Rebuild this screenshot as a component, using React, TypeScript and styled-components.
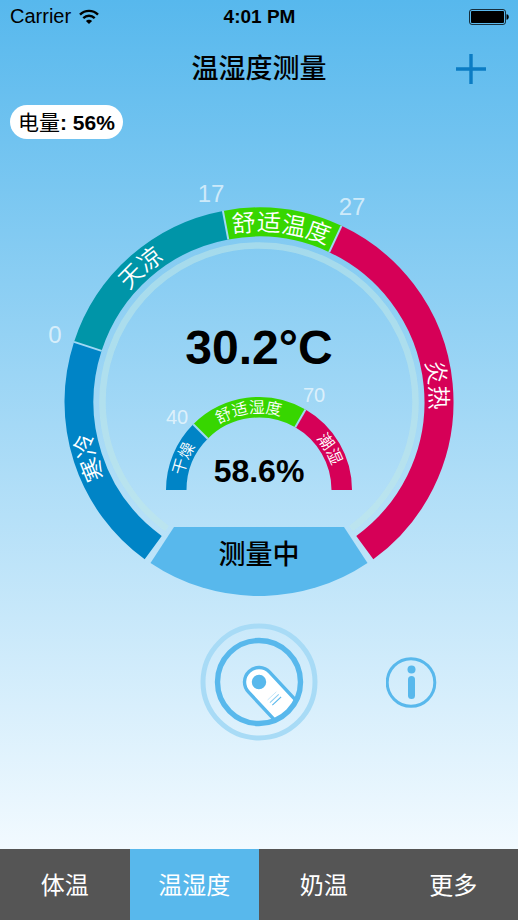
import React from "react";
import styled, { createGlobalStyle } from "styled-components";

const SKY = "#58b8ec";
const BLUE = "#0084c6";
const TEAL = "#0095a8";
const GREEN = "#37d600";
const CRIMSON = "#d60057";

const GlobalStyle = createGlobalStyle`
  *, *::before, *::after { box-sizing: border-box; }
  body {
    margin: 0;
    color: #000;
    font-family: "Liberation Sans", "Noto Sans CJK SC", sans-serif;
  }
  button {
    margin: 0;
    padding: 0;
    border: 0;
    background: none;
    color: inherit;
    font: inherit;
    cursor: pointer;
  }
  svg { display: block; }
`;

const Screen = styled.div`
  display: flex;
  flex-direction: column;
  min-height: 100vh;
`;

const Content = styled.main`
  flex: 1;
  display: flex;
  flex-direction: column;
  background: linear-gradient(#57b8ed, #f2faff);
`;

const StatusBar = styled.div`
  display: grid;
  grid-template-columns: 1fr auto 1fr;
  align-items: center;
  height: 33px;
  padding: 0 9px 0 10px;
  font-size: 20px;
`;

const Carrier = styled.div`
  display: flex;
  align-items: center;
  gap: 8px;
`;

const Clock = styled.time`
  font-size: 19px;
  font-weight: 700;
`;

const BatterySlot = styled.div`
  justify-self: end;
`;

const Header = styled.header`
  display: grid;
  grid-template-columns: 1fr auto 1fr;
  align-items: center;
  height: 72px;
  padding: 0 32px;
`;

const Title = styled.h1`
  grid-column: 2;
  margin: 0;
  font-size: 27px;
  line-height: 40px;
  font-weight: 500;
`;

const AddButton = styled.button`
  justify-self: end;
`;

const PowerBadge = styled.div`
  align-self: flex-start;
  height: 34px;
  margin-left: 10px;
  padding: 0 8px;
  border-radius: 17px;
  background: #fff;
  font-size: 21px;
  line-height: 36px;
  white-space: nowrap;

  strong { font-weight: 700; }
`;

const Dial = styled.section`
  align-self: center;
  display: grid;
  grid-template-rows: 206px 120px 94px;
  justify-items: center;
  width: 440px;
  height: 420px;
  margin-top: 41px;
`;

const DialDrawing = styled.svg`
  grid-area: 1 / 1 / 4 / 2;
`;

const Reading = styled.output<{ $size: number }>`
  grid-column: 1;
  align-self: end;
  font-size: ${(p) => p.$size}px;
  line-height: ${(p) => p.$size}px;
  font-weight: 700;
`;

const Temperature = styled(Reading)`
  grid-row: 1;
  padding-bottom: 14px;
`;

const Humidity = styled(Reading)`
  grid-row: 2;
  padding-bottom: 19px;
`;

const MeasureButton = styled.button`
  grid-area: 3 / 1;
  align-self: end;
  display: grid;
  width: 218px;
  height: 69px;
  margin-bottom: 4px;

  > * { grid-area: 1 / 1; }
`;

const MeasureLabel = styled.span`
  font-size: 27px;
  line-height: 56px;
  font-weight: 500;
`;

const ScaleText = styled.text<{ $size: number }>`
  fill: rgba(255, 255, 255, 0.65);
  font-size: ${(p) => p.$size}px;
  text-anchor: middle;
`;

const ZoneText = styled.text<{ $size: number }>`
  fill: #fff;
  font-family: "Noto Sans CJK SC", sans-serif;
  font-size: ${(p) => p.$size}px;
  font-weight: 350;
  text-anchor: middle;
`;

const Controls = styled.div`
  display: grid;
  grid-template-columns: 1fr auto 1fr;
  align-items: center;
  column-gap: 68px;
  margin: 23px 0 40px;
`;

const ProbeButton = styled.button`
  grid-column: 2;
  border-radius: 50%;
`;

const InfoButton = styled.button`
  justify-self: start;
  border-radius: 50%;
`;

const TabBar = styled.nav`
  display: grid;
  grid-template-columns: repeat(4, 1fr);
  height: 71px;
  background: #555;
`;

const Tab = styled.button<{ $active: boolean }>`
  padding-bottom: 3px;
  background: ${(p) => (p.$active ? SKY : "transparent")};
  color: #fff;
  font-family: "Noto Sans CJK SC", sans-serif;
  font-size: 24px;
  font-weight: 400;
`;

interface Zone {
  id: string;
  label: string;
  from: number;
  to: number;
  color: string;
}

const temperatureZones: Zone[] = [
  { id: "cold", label: "寒冷", from: 126, to: 198, color: BLUE },
  { id: "cool", label: "天凉", from: 198, to: 259.3, color: TEAL },
  { id: "mild", label: "舒适温度", from: 259.3, to: 295.1, color: GREEN },
  { id: "hot", label: "炎热", from: 295.1, to: 414, color: CRIMSON },
];

const humidityZones: Zone[] = [
  { id: "dry", label: "干燥", from: 180, to: 225, color: BLUE },
  { id: "comfy", label: "舒适湿度", from: 225, to: 300, color: GREEN },
  { id: "damp", label: "潮湿", from: 300, to: 360, color: CRIMSON },
];

const point = (cx: number, cy: number, r: number, deg: number) => {
  const a = (deg * Math.PI) / 180;
  return `${(cx + r * Math.cos(a)).toFixed(2)} ${(cy + r * Math.sin(a)).toFixed(2)}`;
};

const arc = (cx: number, cy: number, r: number, from: number, to: number) =>
  `M${point(cx, cy, r, from)}A${r} ${r} 0 ${to - from > 180 ? 1 : 0} 1 ${point(cx, cy, r, to)}`;

interface BandProps {
  zones: Zone[];
  cx: number;
  cy: number;
  inner: number;
  outer: number;
  textRadius: number;
  textSize: number;
}

function Band({ zones, cx, cy, inner, outer, textRadius, textSize }: BandProps) {
  const mid = (inner + outer) / 2;
  return (
    <g>
      {zones.map((z) => (
        <path
          key={z.id}
          d={arc(cx, cy, mid, z.from, z.to)}
          fill="none"
          stroke={z.color}
          strokeWidth={outer - inner}
        />
      ))}
      {zones.slice(1).map((z) => (
        <path
          key={z.id}
          d={`M${point(cx, cy, inner, z.from)}L${point(cx, cy, outer, z.from)}`}
          stroke="#9fd8f4"
          strokeWidth="2"
        />
      ))}
      {zones.map((z) => (
        <g key={z.id}>
          <path id={`zone-${z.id}`} d={arc(cx, cy, textRadius, z.from, z.to)} fill="none" />
          <ZoneText $size={textSize}>
            <textPath href={`#zone-${z.id}`} startOffset="50%">
              {z.label}
            </textPath>
          </ZoneText>
        </g>
      ))}
    </g>
  );
}

function WifiIcon() {
  return (
    <svg width="20" height="16" viewBox="0 0 20 16" fill="none" stroke="#000" strokeWidth="2.4" aria-hidden="true">
      <path d="M1 5.6C6 .6 14 .6 19 5.6" />
      <path d="M4.3 9.2C7.6 6 12.4 6 15.7 9.2" />
      <path d="M10 15L6.9 12C8.6 10.2 11.4 10.2 13.1 12Z" fill="#000" stroke="none" />
    </svg>
  );
}

function BatteryIcon() {
  return (
    <svg width="40" height="16" viewBox="0 0 40 16" aria-hidden="true">
      <rect x="0.5" y="0.5" width="36" height="15" rx="2.5" fill="none" stroke="#000" strokeOpacity="0.75" />
      <rect x="2" y="2" width="33" height="12" rx="1" fill="#000" />
      <path d="M37.5 5.3C40.5 5.3 40.5 10.7 37.5 10.7Z" fill="#000" />
    </svg>
  );
}

function ProbeIcon() {
  return (
    <svg width="118" height="118" viewBox="-59 -59 118 118" aria-hidden="true">
      <defs>
        <clipPath id="probe-window">
          <circle r="41" />
        </clipPath>
      </defs>
      <circle r="56" fill="none" stroke="#a8dbf6" strokeWidth="5" />
      <g clipPath="url(#probe-window)">
        <g transform="rotate(47)" stroke={SKY}>
          <rect x="-14.5" y="-14.5" width="80" height="29" rx="14.5" fill="#fff" strokeWidth="3.4" />
          <circle r="7.2" fill={SKY} stroke="none" />
          <path d="M19 -6V6" strokeWidth="0.8" strokeOpacity="0.4" />
          <path d="M22.5 -6V6" strokeWidth="1" strokeOpacity="0.7" />
          <path d="M26 -6V6" strokeWidth="1.2" />
        </g>
      </g>
      <circle r="41.5" fill="none" stroke={SKY} strokeWidth="5.4" />
    </svg>
  );
}

function InfoIcon() {
  return (
    <svg width="51" height="51" viewBox="0 0 51 51" aria-hidden="true">
      <circle cx="25" cy="25.5" r="23.8" fill="none" stroke={SKY} strokeWidth="3" />
      <circle cx="25.5" cy="12.5" r="4" fill={SKY} />
      <rect x="22" y="19" width="7" height="23" rx="3.5" fill={SKY} />
    </svg>
  );
}

const tabs = ["体温", "温湿度", "奶温", "更多"];

export default function App() {
  const [active, setActive] = React.useState("温湿度");

  return (
    <Screen>
      <GlobalStyle />
      <Content>
        <StatusBar>
          <Carrier>
            Carrier
            <WifiIcon />
          </Carrier>
          <Clock>4:01 PM</Clock>
          <BatterySlot>
            <BatteryIcon />
          </BatterySlot>
        </StatusBar>

        <Header>
          <Title>温湿度测量</Title>
          <AddButton type="button" aria-label="添加">
            <svg width="30" height="30" viewBox="0 0 30 30" stroke="#0b7cc4" strokeWidth="3.4" aria-hidden="true">
              <path d="M15 0V30M0 15H30" />
            </svg>
          </AddButton>
        </Header>

        <PowerBadge>
          电量<strong>: 56%</strong>
        </PowerBadge>

        <Dial>
          <DialDrawing width="440" height="420" viewBox="0 0 440 420">
            <path d={arc(220, 222, 156.5, 126, 414)} fill="none" stroke="#c0e8e8" strokeOpacity="0.55" strokeWidth="6.5" />
            <Band
              zones={temperatureZones}
              cx={220}
              cy={222}
              inner={165.5}
              outer={194.5}
              textRadius={171}
              textSize={24}
            />
            <Band
              zones={humidityZones}
              cx={220}
              cy={310}
              inner={72.5}
              outer={93}
              textRadius={77}
              textSize={16}
            />
            <ScaleText $size={24} x="16" y="163">0</ScaleText>
            <ScaleText $size={24} x="172" y="22">17</ScaleText>
            <ScaleText $size={24} x="313" y="35">27</ScaleText>
            <ScaleText $size={20} x="138" y="244">40</ScaleText>
            <ScaleText $size={20} x="275" y="222">70</ScaleText>
          </DialDrawing>
          <Temperature $size={48}>30.2°C</Temperature>
          <Humidity $size={32}>58.6%</Humidity>
          <MeasureButton type="button">
            <svg width="218" height="69" viewBox="0 0 218 69" aria-hidden="true">
              <path d="M24 0H194L217.5 36A194.5 194.5 0 0 1 0.5 36Z" fill={SKY} />
            </svg>
            <MeasureLabel>测量中</MeasureLabel>
          </MeasureButton>
        </Dial>

        <Controls>
          <ProbeButton type="button" aria-label="探头">
            <ProbeIcon />
          </ProbeButton>
          <InfoButton type="button" aria-label="信息">
            <InfoIcon />
          </InfoButton>
        </Controls>
      </Content>

      <TabBar>
        {tabs.map((t) => (
          <Tab
            key={t}
            type="button"
            $active={t === active}
            aria-current={t === active ? "page" : undefined}
            onClick={() => setActive(t)}
          >
            {t}
          </Tab>
        ))}
      </TabBar>
    </Screen>
  );
}
